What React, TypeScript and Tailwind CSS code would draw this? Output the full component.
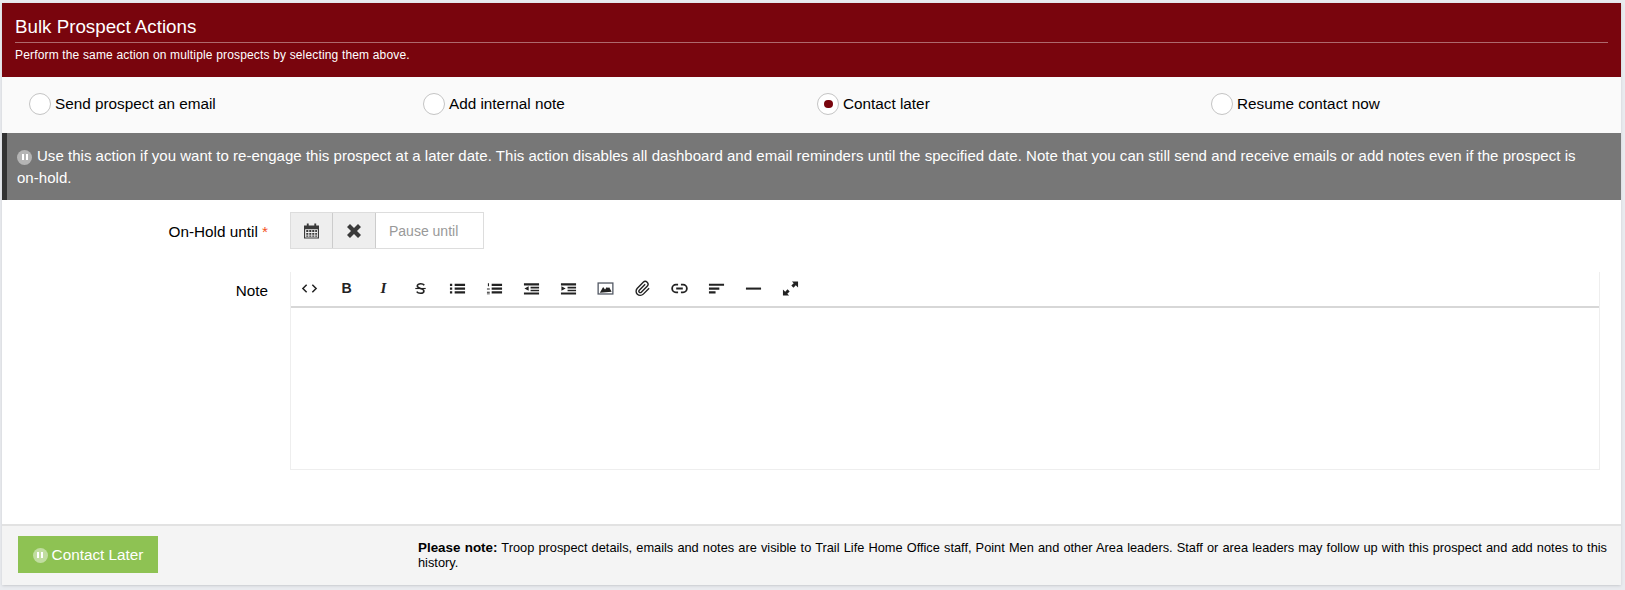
const actions = [
  { label: 'Send prospect an email', checked: false },
  { label: 'Add internal note', checked: false },
  { label: 'Contact later', checked: true },
  { label: 'Resume contact now', checked: false },
];

function PauseIcon() {
  return (
    <span className="inline-flex h-[15px] w-[15px] shrink-0 items-center justify-center gap-[2px] rounded-full bg-white/45">
      <span className="h-[6px] w-[2px] bg-white" />
      <span className="h-[6px] w-[2px] bg-white" />
    </span>
  );
}

const tools = [
  <path key="code" d="M6 5 2 9l4 4M12 5l4 4-4 4" fill="none" stroke="currentColor" strokeWidth="1.6" />,
  <text key="b" x="9" y="14" textAnchor="middle" fontSize="15" fontWeight="700" fontFamily="Liberation Sans, sans-serif" fill="currentColor">B</text>,
  <text key="i" x="9" y="14" textAnchor="middle" fontSize="16" fontWeight="700" fontStyle="italic" fontFamily="Liberation Serif, serif" fill="currentColor">I</text>,
  <g key="s">
    <path d="M13 5.6C12.2 4.4 10.8 4 9.2 4 7.2 4 5.6 4.9 5.6 6.4c0 3 7 2 7 5.2 0 1.6-1.6 2.5-3.6 2.5-1.7 0-3.2-.5-4-1.8" fill="none" stroke="currentColor" strokeWidth="1.7" />
    <path d="M3.5 9h11" stroke="currentColor" strokeWidth="1.2" />
  </g>,
  <path key="ul" d="M6 4h11v2.4H6zM6 8h11v2.4H6zM6 12h11v2.4H6zM1 4h2.4v2.4H1zM1 8h2.4v2.4H1zM1 12h2.4v2.4H1z" fill="currentColor" />,
  <g key="ol">
    <path d="M6 4h11v2.4H6zM6 8h11v2.4H6zM6 12h11v2.4H6z" fill="currentColor" />
    <path d="M2 3.5h1.2v3H2zM1 9h3v1.1H1zM1 12.5h3v1H1zM1 14.2h3v1H1z" fill="currentColor" />
  </g>,
  <path key="out" d="M1 3.5h16v2.2H1zM8 7.2h9v1.8H8zM8 10.2h9v1.8H8zM1 13.2h16v2.2H1zM6 6.6v4.8L1.5 9z" fill="currentColor" />,
  <path key="in" d="M1 3.5h16v2.2H1zM8 7.2h9v1.8H8zM8 10.2h9v1.8H8zM1 13.2h16v2.2H1zM1.5 6.6v4.8L6 9z" fill="currentColor" />,
  <g key="img">
    <rect x="1.2" y="3.2" width="15.6" height="11.6" fill="none" stroke="#555b66" strokeWidth="1.4" />
    <path d="M3 13.5 6.5 7.5l2 2.5 2-2.5 1 1 1.4-.8 2.6 4.8z" fill="currentColor" />
  </g>,
  <path key="clip" d="m16 6-8.414 8.586a2 2 0 0 0 2.829 2.828l8.414-8.586a4 4 0 1 0-5.657-5.657l-8.379 8.551a6 6 0 1 0 8.485 8.485l8.379-8.551" transform="scale(.74)" fill="none" stroke="currentColor" strokeWidth="2" />,
  <path key="link" d="M7.5 5H5.2a4 4 0 0 0 0 8h2.3M10.5 5h2.3a4 4 0 0 1 0 8h-2.3M5.5 9h7" fill="none" stroke="currentColor" strokeWidth="1.9" />,
  <path key="align" d="M1 4h16v2.2H1zM1 8h11v2.2H1zM1 12h7v2.2H1z" fill="currentColor" />,
  <path key="hr" d="M1 8h16v2.2H1z" fill="currentColor" />,
  <path key="full" d="M10.5 1.5H17V8l-2.4-2.4-2.5 2.5-2.2-2.2 2.5-2.5zM7.5 16.5H1V10l2.4 2.4 2.5-2.5 2.2 2.2-2.5 2.5z" fill="currentColor" />,
];

export default function App() {
  return (
    <div className="h-[590px] bg-[#e9ebef] pt-[3px] pl-[2px] pr-[4px] font-['Liberation_Sans',Arial,sans-serif] text-black">
      <div className="bg-white shadow-sm">
        <header className="h-[74px] bg-[#79050d] px-[13px] pt-[13px] text-white">
          <h2 className="h-[27px] border-b border-white/40 text-[18.75px] leading-[22px]">Bulk Prospect Actions</h2>
          <p className="mt-[5px] text-[12px] leading-[14px] tracking-[0.16px]">Perform the same action on multiple prospects by selecting them above.</p>
        </header>

        <div className="grid h-[56px] grid-cols-[394px_394px_394px_1fr] items-center bg-[#fafafa] pb-[3px] pl-[27px]">
          {actions.map((a) => (
            <label key={a.label} className="flex items-center gap-[4px] text-[15.3px]">
              <span className="flex h-[22px] w-[22px] items-center justify-center rounded-full border border-[#c4c4c4] bg-white">
                {a.checked && <span className="h-[8px] w-[9px] rounded-full bg-[#79050d]" />}
              </span>
              <span className="pt-[1px]">{a.label}</span>
            </label>
          ))}
        </div>

        <div className="h-[67px] border-l-[5px] border-[#333333] bg-[#777777] px-[10px] py-[11px] text-[15px] leading-[22px] tracking-[0.03px] text-white">
          <span className="mr-[5px] inline-block align-[1px]">
            <PauseIcon />
          </span>
          Use this action if you want to re-engage this prospect at a later date. This action disables all dashboard and email reminders until the specified date. Note that you can still send and receive emails or add notes even if the prospect is <span className="whitespace-nowrap">on-hold.</span>
        </div>

        <div className="flex h-[72px] items-start gap-[22px] pt-[12px]">
          <label className="w-[266px] pt-[11px] text-right text-[15.3px] leading-[18px]">
            On-Hold until <span className="text-[#f4511e]">*</span>
          </label>
          <div className="flex h-[37px] w-[194px] border border-[#dddddd] text-[#3a3a3a]">
            <span className="flex w-[42px] items-center justify-center border-r border-[#cccccc] bg-[#eeeeee]">
              <svg viewBox="0 0 16 16" className="h-[16px] w-[15px]" fill="currentColor">
                <path d="M3 0h2v2h6V0h2v2h3v14H0V2h3zM1.2 6v8.8h13.6V6z" />
                <path d="M2.4 7h2.2v2H2.4zM5.6 7h2.2v2H5.6zM8.8 7H11v2H8.8zM12 7h1.8v2H12zM2.4 10h2.2v2H2.4zM5.6 10h2.2v2H5.6zM8.8 10H11v2H8.8zM12 10h1.8v2H12zM2.4 12.8h2.2v1.4H2.4zM5.6 12.8h2.2v1.4H5.6zM8.8 12.8H11v1.4H8.8zM12 12.8h1.8v1.4H12z" />
              </svg>
            </span>
            <span className="flex w-[43px] items-center justify-center border-r border-[#cccccc] bg-[#eeeeee]">
              <svg viewBox="0 0 14 14" className="h-[14px] w-[14px]" fill="currentColor">
                <path d="M3 0 7 4l4-4 3 3-4 4 4 4-3 3-4-4-4 4-3-3 4-4-4-4z" />
              </svg>
            </span>
            <span className="flex flex-1 items-center pl-[13px] pt-[1px] text-[14px] text-[#999999]">Pause until</span>
          </div>
        </div>

        <div className="flex h-[252px] items-start gap-[22px]">
          <label className="w-[266px] pt-[10px] text-right text-[15.3px] leading-[18px]">Note</label>
          <div className="w-[1310px] border-x border-b border-[#eeeeee]">
            <div className="flex h-[36px] items-center border-b-2 border-[#d7d7d7] pb-[2px] text-[#222222]">
              {tools.map((icon, i) => (
                <span key={i} className="flex w-[37px] items-center justify-center">
                  <svg viewBox="0 0 18 18" className="h-[17px] w-[17px]">{icon}</svg>
                </span>
              ))}
            </div>
            <div className="h-[161px] bg-white" />
          </div>
        </div>

        <footer className="flex h-[61px] items-start border-t-2 border-[#e2e2e2] bg-[#f4f4f4] pl-[16px] pr-[14px] pt-[10px]">
          <button className="flex h-[37px] w-[140px] items-center justify-center gap-[4px] bg-[#8ec253] pt-[1px] text-[15.3px] text-white">
            <PauseIcon />
            Contact Later
          </button>
          <p className="ml-[260px] flex-1 pt-[4px] text-justify text-[12.8px] leading-[15px]">
            <b className="text-[13.4px]">Please note:</b> Troop prospect details, emails and notes are visible to Trail Life Home Office staff, Point Men and other Area leaders. Staff or area leaders may follow up with this prospect and add notes to this history.
          </p>
        </footer>
      </div>
    </div>
  );
}
